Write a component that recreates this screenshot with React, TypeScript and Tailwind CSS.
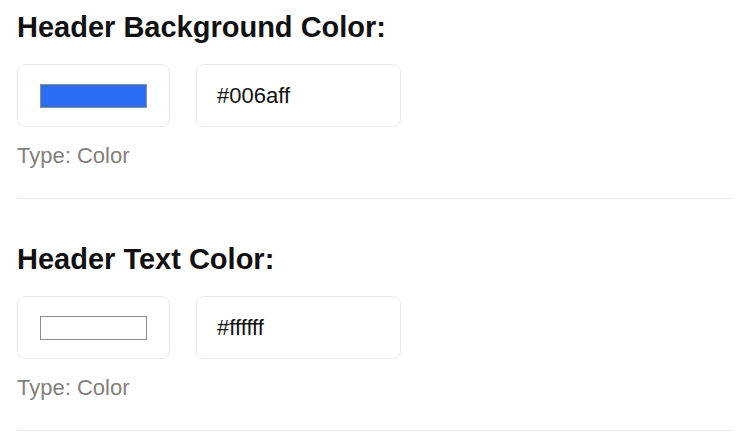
const settings = [
  { label: "Header Background Color:", value: "#006aff", swatch: "#2a6df5" },
  { label: "Header Text Color:", value: "#ffffff", swatch: "#ffffff" },
];

const ColorSetting = ({
  label,
  value,
  swatch,
  first,
}: {
  label: string;
  value: string;
  swatch: string;
  first: boolean;
}) => {
  return (
    <div className={first ? "flex flex-col" : "mt-[43px] flex flex-col"}>
      <h2 className="text-[29px] leading-[34px] font-bold text-[#111]">{label}</h2>
      <div className="mt-[20px] flex gap-[26px]">
        <div className="flex h-[63px] w-[153px] items-center justify-center rounded-[8px] border border-[#ebebeb] bg-white">
          <div
            className="h-[24px] w-[107px] border border-[#8c8c8c]"
            style={{ background: swatch }}
          />
        </div>
        <div className="flex h-[63px] w-[205px] items-center rounded-[8px] border border-[#ebebeb] bg-white px-[20px] text-[22px] text-[#111]">
          {value}
        </div>
      </div>
      <p className="mt-[12px] text-[22px] leading-[33px] text-[#857f7c]">Type: Color</p>
      <div className="mt-[26px] h-px bg-[#e6e6e6]" />
    </div>
  );
};

export default function App() {
  return (
    <div
      className="h-[438px] w-[750px] overflow-hidden bg-white pt-[10px] pr-[18px] pl-[17px]"
      style={{ fontFamily: '"Liberation Sans", Arial, sans-serif' }}
    >
      {settings.map((s, i) => (
        <ColorSetting key={s.label} {...s} first={i === 0} />
      ))}
    </div>
  );
}
